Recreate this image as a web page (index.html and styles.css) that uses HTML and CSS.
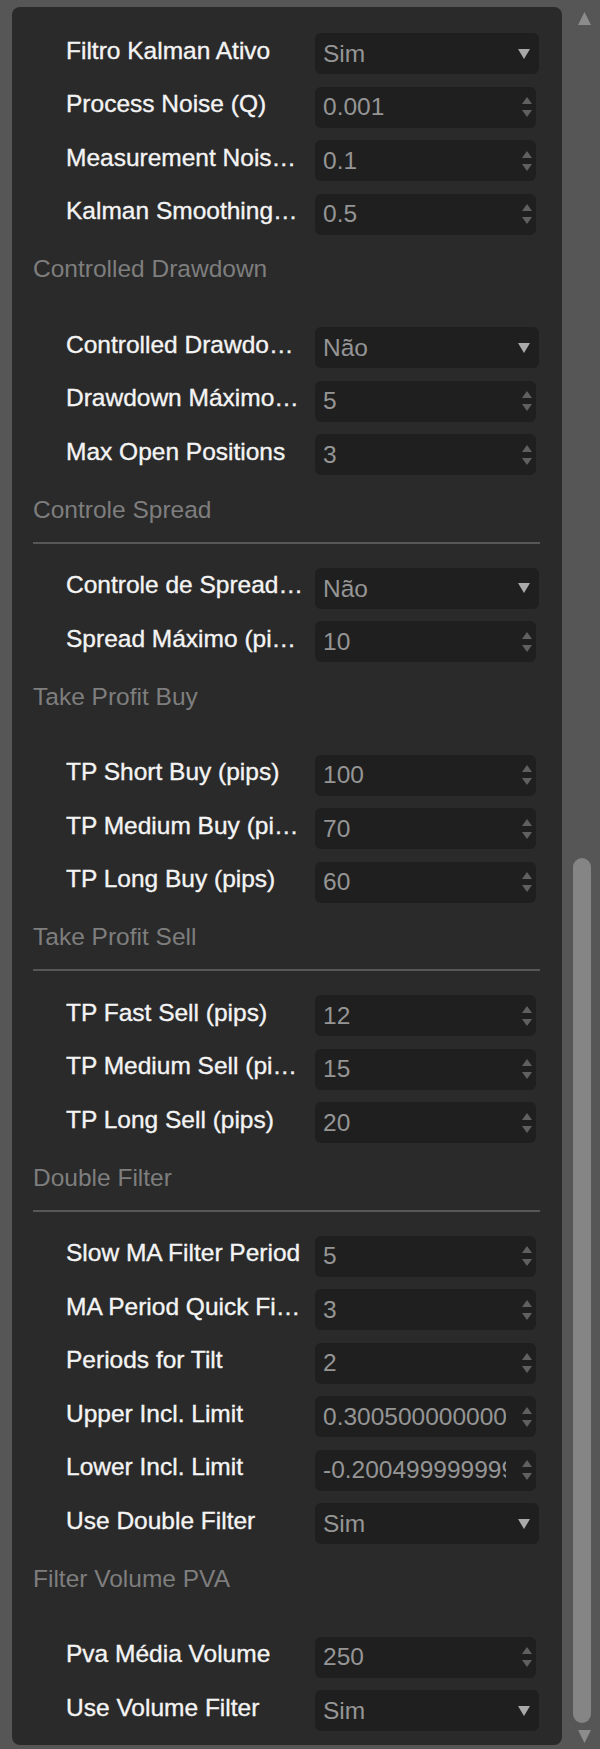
FILE: index.html
```html
<!DOCTYPE html>
<html lang="pt">
<head>
    <meta charset="UTF-8">
    <meta name="viewport" content="width=device-width, initial-scale=1.0">
    <title>Parâmetros do Robô</title>
    <link rel="stylesheet" href="styles.css">
</head>
<body>

<div class="main">
  <form class="panel">

    <div class="row">
      <label class="row-label" for="kalman">Filtro Kalman Ativo</label>
      <div class="field select-field">
        <select id="kalman"><option>Sim</option><option>Não</option></select>
        <svg class="caret" width="12" height="10" viewBox="0 0 12 10"><polygon points="0,0 12,0 6,10"/></svg>
      </div>
    </div>
    <div class="row">
      <label class="row-label" for="qnoise">Process Noise (Q)</label>
      <div class="field num-field">
        <input type="number" id="qnoise" value="0.001">
        <svg class="spin" width="10" height="20" viewBox="0 0 10 20"><polygon points="5,0 10,7 0,7"/><polygon points="0,13 10,13 5,20"/></svg>
      </div>
    </div>
    <div class="row">
      <label class="row-label" for="rnoise">Measurement Noise (R)</label>
      <div class="field num-field">
        <input type="number" id="rnoise" value="0.1">
        <svg class="spin" width="10" height="20" viewBox="0 0 10 20"><polygon points="5,0 10,7 0,7"/><polygon points="0,13 10,13 5,20"/></svg>
      </div>
    </div>
    <div class="row">
      <label class="row-label" for="smooth">Kalman Smoothing Factor</label>
      <div class="field num-field">
        <input type="number" id="smooth" value="0.5">
        <svg class="spin" width="10" height="20" viewBox="0 0 10 20"><polygon points="5,0 10,7 0,7"/><polygon points="0,13 10,13 5,20"/></svg>
      </div>
    </div>

    <h3 class="section-title no-rule">Controlled Drawdown</h3>
    <div class="row">
      <label class="row-label" for="cdd">Controlled Drawdown Ativo</label>
      <div class="field select-field">
        <select id="cdd"><option>Não</option><option>Sim</option></select>
        <svg class="caret" width="12" height="10" viewBox="0 0 12 10"><polygon points="0,0 12,0 6,10"/></svg>
      </div>
    </div>
    <div class="row">
      <label class="row-label" for="ddmax">Drawdown Máximo (%)</label>
      <div class="field num-field">
        <input type="number" id="ddmax" value="5">
        <svg class="spin" width="10" height="20" viewBox="0 0 10 20"><polygon points="5,0 10,7 0,7"/><polygon points="0,13 10,13 5,20"/></svg>
      </div>
    </div>
    <div class="row">
      <label class="row-label" for="maxpos">Max Open Positions</label>
      <div class="field num-field">
        <input type="number" id="maxpos" value="3">
        <svg class="spin" width="10" height="20" viewBox="0 0 10 20"><polygon points="5,0 10,7 0,7"/><polygon points="0,13 10,13 5,20"/></svg>
      </div>
    </div>

    <h3 class="section-title">Controle Spread</h3>
    <div class="row">
      <label class="row-label" for="spreadon">Controle de Spread Ativo</label>
      <div class="field select-field">
        <select id="spreadon"><option>Não</option><option>Sim</option></select>
        <svg class="caret" width="12" height="10" viewBox="0 0 12 10"><polygon points="0,0 12,0 6,10"/></svg>
      </div>
    </div>
    <div class="row">
      <label class="row-label" for="spreadmax">Spread Máximo (pips)</label>
      <div class="field num-field">
        <input type="number" id="spreadmax" value="10">
        <svg class="spin" width="10" height="20" viewBox="0 0 10 20"><polygon points="5,0 10,7 0,7"/><polygon points="0,13 10,13 5,20"/></svg>
      </div>
    </div>

    <h3 class="section-title no-rule">Take Profit Buy</h3>
    <div class="row">
      <label class="row-label" for="tpsb">TP Short Buy (pips)</label>
      <div class="field num-field">
        <input type="number" id="tpsb" value="100">
        <svg class="spin" width="10" height="20" viewBox="0 0 10 20"><polygon points="5,0 10,7 0,7"/><polygon points="0,13 10,13 5,20"/></svg>
      </div>
    </div>
    <div class="row">
      <label class="row-label" for="tpmb">TP Medium Buy (pips)</label>
      <div class="field num-field">
        <input type="number" id="tpmb" value="70">
        <svg class="spin" width="10" height="20" viewBox="0 0 10 20"><polygon points="5,0 10,7 0,7"/><polygon points="0,13 10,13 5,20"/></svg>
      </div>
    </div>
    <div class="row">
      <label class="row-label" for="tplb">TP Long Buy (pips)</label>
      <div class="field num-field">
        <input type="number" id="tplb" value="60">
        <svg class="spin" width="10" height="20" viewBox="0 0 10 20"><polygon points="5,0 10,7 0,7"/><polygon points="0,13 10,13 5,20"/></svg>
      </div>
    </div>

    <h3 class="section-title">Take Profit Sell</h3>
    <div class="row">
      <label class="row-label" for="tpfs">TP Fast Sell (pips)</label>
      <div class="field num-field">
        <input type="number" id="tpfs" value="12">
        <svg class="spin" width="10" height="20" viewBox="0 0 10 20"><polygon points="5,0 10,7 0,7"/><polygon points="0,13 10,13 5,20"/></svg>
      </div>
    </div>
    <div class="row">
      <label class="row-label" for="tpms">TP Medium Sell (pips)</label>
      <div class="field num-field">
        <input type="number" id="tpms" value="15">
        <svg class="spin" width="10" height="20" viewBox="0 0 10 20"><polygon points="5,0 10,7 0,7"/><polygon points="0,13 10,13 5,20"/></svg>
      </div>
    </div>
    <div class="row">
      <label class="row-label" for="tpls">TP Long Sell (pips)</label>
      <div class="field num-field">
        <input type="number" id="tpls" value="20">
        <svg class="spin" width="10" height="20" viewBox="0 0 10 20"><polygon points="5,0 10,7 0,7"/><polygon points="0,13 10,13 5,20"/></svg>
      </div>
    </div>

    <h3 class="section-title">Double Filter</h3>
    <div class="row">
      <label class="row-label" for="slowma">Slow MA Filter Period</label>
      <div class="field num-field">
        <input type="number" id="slowma" value="5">
        <svg class="spin" width="10" height="20" viewBox="0 0 10 20"><polygon points="5,0 10,7 0,7"/><polygon points="0,13 10,13 5,20"/></svg>
      </div>
    </div>
    <div class="row">
      <label class="row-label" for="quickma">MA Period Quick Filter</label>
      <div class="field num-field">
        <input type="number" id="quickma" value="3">
        <svg class="spin" width="10" height="20" viewBox="0 0 10 20"><polygon points="5,0 10,7 0,7"/><polygon points="0,13 10,13 5,20"/></svg>
      </div>
    </div>
    <div class="row">
      <label class="row-label" for="tilt">Periods for Tilt</label>
      <div class="field num-field">
        <input type="number" id="tilt" value="2">
        <svg class="spin" width="10" height="20" viewBox="0 0 10 20"><polygon points="5,0 10,7 0,7"/><polygon points="0,13 10,13 5,20"/></svg>
      </div>
    </div>
    <div class="row">
      <label class="row-label" for="upper">Upper Incl. Limit</label>
      <div class="field num-field">
        <input type="number" id="upper" value="0.30050000000000004">
        <svg class="spin" width="10" height="20" viewBox="0 0 10 20"><polygon points="5,0 10,7 0,7"/><polygon points="0,13 10,13 5,20"/></svg>
      </div>
    </div>
    <div class="row">
      <label class="row-label" for="lower">Lower Incl. Limit</label>
      <div class="field num-field">
        <input type="number" id="lower" value="-0.20049999999999998">
        <svg class="spin" width="10" height="20" viewBox="0 0 10 20"><polygon points="5,0 10,7 0,7"/><polygon points="0,13 10,13 5,20"/></svg>
      </div>
    </div>
    <div class="row">
      <label class="row-label" for="usedouble">Use Double Filter</label>
      <div class="field select-field">
        <select id="usedouble"><option>Sim</option><option>Não</option></select>
        <svg class="caret" width="12" height="10" viewBox="0 0 12 10"><polygon points="0,0 12,0 6,10"/></svg>
      </div>
    </div>

    <h3 class="section-title no-rule">Filter Volume PVA</h3>
    <div class="row">
      <label class="row-label" for="pva">Pva Média Volume</label>
      <div class="field num-field">
        <input type="number" id="pva" value="250">
        <svg class="spin" width="10" height="20" viewBox="0 0 10 20"><polygon points="5,0 10,7 0,7"/><polygon points="0,13 10,13 5,20"/></svg>
      </div>
    </div>
    <div class="row">
      <label class="row-label" for="usevol">Use Volume Filter</label>
      <div class="field select-field">
        <select id="usevol"><option>Sim</option><option>Não</option></select>
        <svg class="caret" width="12" height="10" viewBox="0 0 12 10"><polygon points="0,0 12,0 6,10"/></svg>
      </div>
    </div>

  </form>
</div>

<div class="scrollbar">
  <svg class="scroll-arrow" width="13" height="13" viewBox="0 0 13 13"><polygon points="6.5,0 13,13 0,13"/></svg>
  <div class="scroll-thumb"></div>
  <svg class="scroll-arrow down" width="13" height="13" viewBox="0 0 13 13"><polygon points="0,0 13,0 6.5,13"/></svg>
</div>

</body>
</html>
```

FILE: styles.css
```css
body {
    margin: 0;
    height: 1749px;
    display: flex;
    background-color: #565656;
    font-family: "Liberation Sans", Arial, sans-serif;
    overflow: hidden;
}

.main {
    flex: 1;
    padding: 7px 0 4px 12px;
    display: flex;
}

.panel {
    flex: 1;
    background-color: #2a2a2a;
    border-radius: 8px;
    padding: 26px 22px 0 21px;
    overflow: hidden;
}

.row {
    display: flex;
    align-items: center;
    height: 41px;
    margin-bottom: 12.5px;
    padding-left: 33px;
}

.row-label {
    width: 237px;
    margin-right: 12px;
    color: #f4f4f4;
    font-size: 24.5px;
    -webkit-text-stroke: 0.35px #f4f4f4;
    white-space: nowrap;
    overflow: hidden;
    text-overflow: ellipsis;
    margin-top: -6px;
}

.field {
    height: 41px;
    display: flex;
    align-items: center;
    background-color: #1f1f1f;
    border-radius: 6px;
    box-sizing: border-box;
}

.select-field {
    width: 224px;
    padding-right: 9px;
}

.num-field {
    width: 221px;
    padding-right: 4px;
}

.field select, .field input {
    flex: 1;
    min-width: 0;
    height: 100%;
    border: none;
    outline: none;
    background: transparent;
    color: #959595;
    font-family: "Liberation Sans", Arial, sans-serif;
    font-size: 24.5px;
    padding: 0 0 0 8px;
    -webkit-appearance: none;
    appearance: none;
}

input[type="number"] {
    -moz-appearance: textfield;
}
input[type="number"]::-webkit-inner-spin-button,
input[type="number"]::-webkit-outer-spin-button {
    -webkit-appearance: none;
    margin: 0;
}

.caret {
    fill: #a9a9a9;
    flex: none;
}

.spin {
    fill: #606060;
    flex: none;
    margin-left: 16px;
}

.section-title {
    margin: 0 0 24px 0;
    padding: 8px 0 18px 0;
    font-size: 24.5px;
    line-height: 28px;
    font-weight: normal;
    color: #7e7e7e;
    border-bottom: 2px solid #575757;
}

.section-title.no-rule {
    border-bottom-color: transparent;
}

.scrollbar {
    width: 38px;
    display: flex;
    flex-direction: column;
    padding-top: 12px;
}

.scroll-arrow {
    fill: #8c8c8c;
    margin-left: 16px;
    flex: none;
}

.scroll-thumb {
    width: 18px;
    height: 865px;
    margin: 833px 0 7px 11px;
    background-color: #858585;
    border-radius: 9px;
}
```
